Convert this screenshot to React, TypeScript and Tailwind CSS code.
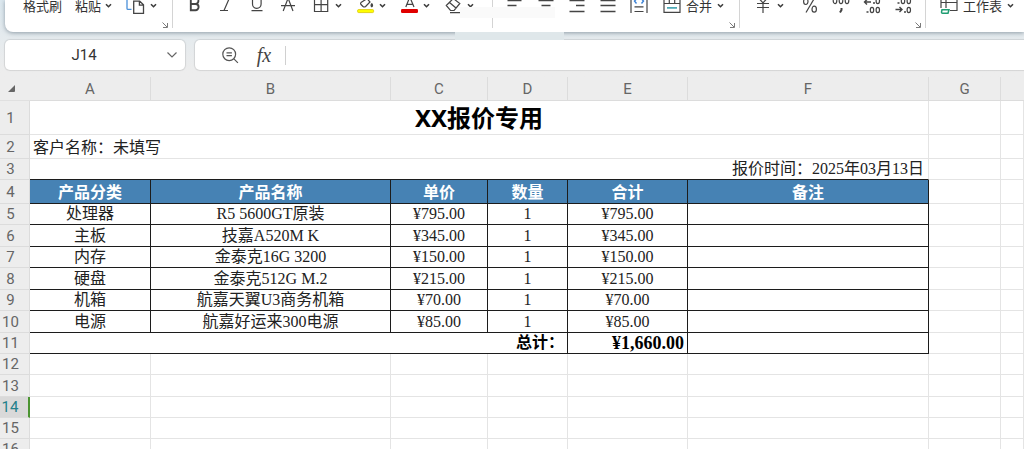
import { useState, type ReactNode } from 'react';
import { clsx } from 'clsx';

const COLUMNS = [
  { label: 'A', width: 'w-[121px]' },
  { label: 'B', width: 'w-[240px]' },
  { label: 'C', width: 'w-[97px]' },
  { label: 'D', width: 'w-[80px]' },
  { label: 'E', width: 'w-[120px]' },
  { label: 'F', width: 'w-[241px]' },
  { label: 'G', width: 'w-[72px]' },
  { label: '', width: '' },
];

const HEADINGS = ['产品分类', '产品名称', '单价', '数量', '合计', '备注'];

const ITEMS = [
  { category: '处理器', name: 'R5 5600GT原装', price: '¥795.00', count: 1, total: '¥795.00' },
  { category: '主板', name: '技嘉A520M K', price: '¥345.00', count: 1, total: '¥345.00' },
  { category: '内存', name: '金泰克16G 3200', price: '¥150.00', count: 1, total: '¥150.00' },
  { category: '硬盘', name: '金泰克512G M.2', price: '¥215.00', count: 1, total: '¥215.00' },
  { category: '机箱', name: '航嘉天翼U3商务机箱', price: '¥70.00', count: 1, total: '¥70.00' },
  { category: '电源', name: '航嘉好运来300电源', price: '¥85.00', count: 1, total: '¥85.00' },
];

const EMPTY_ROWS = [12, 13, 14, 15, 16];
const ACTIVE_ROW = 14;

const SANS = "font-['Noto_Sans','Noto_Sans_CJK_SC',sans-serif]";
const SONG = "font-['Liberation_Serif','Noto_Sans_CJK_SC',serif]";
const GRID = 'border-r border-b border-[#e4e4e4]';
const BOXED = 'border-r border-b border-[#1c1c1c]';

function Chevron() {
  return (
    <svg width="7" height="14" viewBox="0 0 7 14" fill="none" stroke="#3c3c3c" strokeWidth="1.6">
      <path d="M1 4.200 3.500 6.700 6 4.200" />
    </svg>
  );
}

function Launcher({ label }: { label: string }) {
  return (
    <button aria-label={label} className="self-end">
      <svg width="6" height="6" viewBox="0 0 6 6" fill="none" stroke="#7b7b7b">
        <path d="M.5.5 5 5M5.5 1v4.5H1" />
      </svg>
    </button>
  );
}

// Every ribbon icon is drawn on an 18x14 box
function Icon({ children, stroke = '#444444' }: { children: ReactNode; stroke?: string }) {
  return (
    <svg width="18" height="14" viewBox="0 0 18 14" fill="none" stroke={stroke} strokeWidth="1.2">
      {children}
    </svg>
  );
}

function Tool({ label, children, className }: { label: string; children: ReactNode; className?: string }) {
  return (
    <button aria-label={label} className={clsx('flex shrink-0 items-start', className)}>
      {children}
    </button>
  );
}

function Ribbon() {
  const group = 'flex h-7 shrink-0 items-start border-r border-[#d4d4d4]';
  return (
    <div className="relative ml-[5px] flex h-8 items-start rounded-bl-lg bg-white text-[13px] leading-3 text-[#333333] shadow-[0_1px_4px_rgba(60,80,95,0.5)]">
      <div className={clsx(group, 'pr-1 pl-[18px]')}>
        <button className="mr-[13px]">格式刷</button>
        <button className="mr-[14px] flex gap-1">
          粘贴
          <Chevron />
        </button>
        <Tool label="复制" className="mr-[5px] gap-[5px]">
          <svg width="19" height="14" viewBox="0 0 19 14" fill="none" strokeWidth="1.3">
            <path d="M1 0v8.4q0 1 1 1h3.500" stroke="#4a90d9" />
            <path d="M7.700 1.200h6l3.800 3.600v8.500H7.700zM13.400 1.200v3.900h4" stroke="#444444" />
          </svg>
          <Chevron />
        </Tool>
        <Launcher label="剪贴板选项" />
      </div>

      <div className={clsx(group, 'pr-[11px] pl-[6px]')}>
        <Tool label="加粗" className="w-[31px] justify-center">
          <Icon>
            <path d="M4.800 -3v13.200h4.700a3 3 0 0 0 0-6.200H4.800M9.200 4a3 3 0 0 0 3-4" strokeWidth="1.9" />
          </Icon>
        </Tool>
        <Tool label="倾斜" className="w-[31px] justify-center">
          <Icon>
            <path d="M3 10.500h8M7 10.500 12-1" />
          </Icon>
        </Tool>
        <Tool label="下划线" className="w-[31px] justify-center">
          <Icon>
            <path d="M4.500-1v5a4.300 4.300 0 0 0 8.600 0v-5M3.500 10.700h11" />
          </Icon>
        </Tool>
        <Tool label="删除线" className="mr-[2px] w-[31px] justify-center">
          <Icon>
            <path d="M2 5.600h14M4.200 11 8.800-1h.6L14 11" />
          </Icon>
        </Tool>
        <Tool label="边框" className="w-11 gap-1 pl-2">
          <Icon>
            <path d="M1.500-2v13.500h13.200V-2M1.500 4.700h13.200M8.100-2v13.500" />
          </Icon>
          <Chevron />
        </Tool>
        <Tool label="填充颜色" className="w-11 gap-1 pl-2">
          <Icon>
            <path d="M9.500-1 4 2.500q-.8 1 0 2l2 2q1.300 1 2.600 0L13 2 9.500-2" />
            <path d="M14.800 3.500q-1.500 2.500 0 3.300 1.500-.8 0-3.300" fill="#444444" />
            <rect x=".6" y="9.600" width="16" height="3" rx="1" fill="#ffff00" stroke="#d9c400" strokeWidth=".8" />
          </Icon>
          <Chevron />
        </Tool>
        <Tool label="字体颜色" className="w-11 gap-1 pl-2">
          <Icon>
            <path d="M4.800 7 8.400-2h.8L13 7M6.200 4.300h5.500" />
            <rect y="9" width="17" height="4" rx="1.200" fill="#e00000" stroke="none" />
          </Icon>
          <Chevron />
        </Tool>
        <Tool label="清除" className="w-11 gap-1 pl-2">
          <Icon>
            <path d="m1.300 5.500 7-7 6.500 5-5.700 7H5.500zM4.500 2.500l6.500 5.500M5 12.600h10" />
          </Icon>
          <Chevron />
        </Tool>
      </div>

      <div className={clsx(group, 'pr-1 pl-[6px]')}>
        <Tool label="左对齐" className="w-[31px] justify-center">
          <Icon>
            <path d="M1.500.500h14M1.500 5.500h9" strokeWidth="1.400" />
          </Icon>
        </Tool>
        <Tool label="居中" className="w-[31px] justify-center">
          <Icon>
            <path d="M1.500.500h15M4.500 5.500h9" strokeWidth="1.400" />
          </Icon>
        </Tool>
        <Tool label="右对齐" className="w-[31px] justify-center">
          <Icon>
            <path d="M1.500.500h15M8 5.500h8.500M1.500 11.500h15" strokeWidth="1.400" />
          </Icon>
        </Tool>
        <Tool label="两端对齐" className="w-[31px] justify-center">
          <Icon>
            <path d="M1.500.500h15M1.500 5.500h15M1.500 11.500h15" strokeWidth="1.400" />
          </Icon>
        </Tool>
        <Tool label="分散对齐" className="mr-[9px] w-[31px] justify-center">
          <Icon>
            <path d="M1 0v13M17 0v13M4.500 6.800h9M4.500 11.500h9" />
            <path d="M6.500-1 4.500 1l2 2.500M11.500-1l2 2-2 2.500" stroke="#3b82d6" strokeWidth="1.400" />
          </Icon>
        </Tool>
        <button className="mr-[5px] flex gap-[5px]">
          <Icon>
            <path d="M1-1v13.400h16V-1M1 3.500h16M6.300-1v4.500M11.700-1v4.500" />
            <path d="M4 7.900h10" stroke="#2f9aa8" strokeWidth="1.500" />
          </Icon>
          合并
          <Chevron />
        </button>
        <Launcher label="对齐选项" />
      </div>

      <div className={clsx(group, 'pr-1 pl-[14px]')}>
        <Tool label="货币" className="mr-[17px] gap-[5px]">
          <Icon>
            <path d="M4.500-2 9 2.800 13.500-2M9 2.800V13M3 3.500h12M3 7.500h12" />
          </Icon>
          <Chevron />
        </Tool>
        <Tool label="百分比" className="mr-[13px]">
          <Icon>
            <path d="M5 12.500 13-1" />
            <ellipse cx="4.800" cy="1.500" rx="2.200" ry="3" />
            <ellipse cx="13.200" cy="9.200" rx="2.200" ry="3" />
          </Icon>
        </Tool>
        <Tool label="千位分隔" className="mr-[13px]">
          <Icon>
            <ellipse cx="3" cy=".8" rx="1.800" ry="2.800" />
            <ellipse cx="9" cy=".8" rx="1.800" ry="2.800" />
            <ellipse cx="15" cy=".8" rx="1.800" ry="2.800" />
            <path d="M9.500 8v2L8 12.500" strokeWidth="2" />
          </Icon>
        </Tool>
        <Tool label="增加小数位数" className="mr-[13px]">
          <Icon>
            <path d="M8 2H1.500M4-.500 1.500 2 4 4.500M3.500 12h2M10 3h2" strokeWidth="1.400" />
            <ellipse cx="14.800" cy="1" rx="1.700" ry="2.600" />
            <ellipse cx="9" cy="10" rx="1.700" ry="2.600" />
            <ellipse cx="14.800" cy="10" rx="1.700" ry="2.600" />
          </Icon>
        </Tool>
        <Tool label="减少小数位数" className="mr-[3px]">
          <Icon>
            <path d="M1.500 9.500H8M5.500 7 8 9.500 5.500 12M3.500 3h2M10 12h2" strokeWidth="1.400" />
            <ellipse cx="9" cy="1" rx="1.700" ry="2.600" />
            <ellipse cx="14.800" cy="1" rx="1.700" ry="2.600" />
            <ellipse cx="14.800" cy="10" rx="1.700" ry="2.600" />
          </Icon>
        </Tool>
        <Launcher label="数字选项" />
      </div>

      <button className="ml-[14px] flex shrink-0 gap-[5px]">
        <Icon>
          <path d="M1 8V-1M10 10.500h7V-1M1 2.500h16M6 0v8" />
          <path d="M2 9.800h7l-1 3.400H2.500q-1 0-1-1z" stroke="#1f9d72" strokeWidth="1.500" />
        </Icon>
        工作表
        <Chevron />
      </button>

      <div className="absolute top-[7px] left-[455px] h-[11px] w-[95px] bg-[#fafafa]" />
      <div className="absolute top-8 left-[450px] h-2 w-[109px] bg-[#dfe7ea]" />
    </div>
  );
}

function FormulaBar() {
  const [cell, setCell] = useState('J14');
  const [formula, setFormula] = useState('');
  return (
    <div className="mt-2 flex h-[30px] gap-[10px] pl-[5px]">
      <div className="flex w-[180px] shrink-0 items-center rounded-[5px] bg-white shadow-[0_0_1px_1px_rgba(0,0,0,0.1)]">
        <input
          aria-label="名称框"
          value={cell}
          onChange={(e) => setCell(e.target.value)}
          className="w-[158px] bg-transparent text-center font-['Roboto',sans-serif] text-[15px] text-[#333333] outline-none"
        />
        <button aria-label="选择名称" className="ml-1">
          <svg width="10" height="6" viewBox="0 0 10 6" fill="none" stroke="#666666" strokeWidth="1.200">
            <path d="m.5.5 4.500 4.500L9.500.500" />
          </svg>
        </button>
      </div>
      <div className="flex grow items-center rounded-l-[5px] bg-white pl-[27px] shadow-[0_0_1px_1px_rgba(0,0,0,0.1)]">
        <button aria-label="浮动编辑">
          <svg width="17" height="17" viewBox="0 0 17 17" fill="none" stroke="#555555" strokeWidth="1.200">
            <circle cx="7.200" cy="7.200" r="6.400" />
            <path d="M4.500 5.800h5.400M4.500 8.700h5.400M11.900 11.900l4 4" />
          </svg>
        </button>
        <button
          aria-label="插入函数"
          className="ml-4 w-[18px] font-['Liberation_Serif',serif] text-xl leading-5 text-[#444444] italic"
        >
          fx
        </button>
        <input
          aria-label="编辑栏"
          value={formula}
          onChange={(e) => setFormula(e.target.value)}
          className="ml-3 h-[19px] min-w-0 grow border-l border-[#d0d0d0] px-2 text-sm outline-none"
        />
      </div>
    </div>
  );
}

function RowHeader({ row }: { row: number }) {
  return (
    <th
      scope="row"
      className={clsx(
        "border-b border-[#dcdcdc] pr-2 text-center font-['Roboto',sans-serif] text-[15px] leading-5 font-normal",
        row === ACTIVE_ROW
          ? 'border-r-2 border-r-[#4b9431] bg-[#d9d9d9] text-[#23808a]'
          : 'border-r bg-[#ededed] text-[#666666]',
      )}
    >
      {row}
    </th>
  );
}

function GridCells({ count }: { count: number }) {
  return Array.from({ length: count }, (_, i) => <td key={i} className={GRID} />);
}

function Sheet() {
  return (
    <table className="mt-[7px] w-full table-fixed border-separate border-spacing-0 bg-white text-base leading-5 whitespace-nowrap text-[#222222]">
      <colgroup>
        <col className="w-[30px]" />
        {COLUMNS.map((column, i) => (
          <col key={i} className={column.width} />
        ))}
      </colgroup>
      <thead>
        <tr className="h-6 bg-[#ededed] font-['Roboto',sans-serif] text-[15px] text-[#666666]">
          <td className="border-b border-[#e0e0e0]">
            <svg width="7" height="7" viewBox="0 0 7 7" className="ml-2" fill="#666666">
              <path d="M7 0v6q0 1-1 1H0z" />
            </svg>
          </td>
          {COLUMNS.map((column, i) => (
            <th key={i} scope="col" className="border-r border-b border-[#dcdcdc] font-normal last:border-r-0">
              {column.label}
            </th>
          ))}
        </tr>
      </thead>
      <tbody>
        <tr className="h-[34px]">
          <RowHeader row={1} />
          <td colSpan={6} className={clsx(GRID, SANS, 'text-center text-2xl font-bold text-black')}>
            XX报价专用
          </td>
          <GridCells count={2} />
        </tr>
        <tr className="h-6">
          <RowHeader row={2} />
          <td colSpan={6} className={clsx(GRID, SANS, 'pl-[3px]')}>
            客户名称：未填写
          </td>
          <GridCells count={2} />
        </tr>
        <tr className="h-[21px]">
          <RowHeader row={3} />
          <td colSpan={6} className={clsx(SONG, 'border-r border-b border-r-[#e4e4e4] border-b-[#1c1c1c] pr-1 text-right')}>
            报价时间：2025年03月13日
          </td>
          <GridCells count={2} />
        </tr>
        <tr className="h-6">
          <RowHeader row={4} />
          {HEADINGS.map((heading) => (
            <th key={heading} scope="col" className={clsx(BOXED, SANS, 'bg-[#4682b4] font-bold text-white')}>
              {heading}
            </th>
          ))}
          <GridCells count={2} />
        </tr>
        {ITEMS.map((item, i) => (
          <tr key={item.category} className={clsx('text-center', SONG, i % 2 === 0 ? 'h-[21px]' : 'h-[22px]')}>
            <RowHeader row={i + 5} />
            <td className={BOXED}>{item.category}</td>
            <td className={BOXED}>{item.name}</td>
            <td className={BOXED}>{item.price}</td>
            <td className={BOXED}>{item.count}</td>
            <td className={BOXED}>{item.total}</td>
            <td className={BOXED} />
            <GridCells count={2} />
          </tr>
        ))}
        <tr className={clsx('h-[21px] text-right font-bold text-black', SONG)}>
          <RowHeader row={11} />
          <td colSpan={4} className={clsx(BOXED, 'pr-[3px]')}>
            总计：
          </td>
          <td className={clsx(BOXED, 'pr-[3px] text-lg leading-5')}>¥1,660.00</td>
          <td className={BOXED} />
          <GridCells count={2} />
        </tr>
        {EMPTY_ROWS.map((row) => (
          <tr key={row} className={row === 13 ? 'h-[22px]' : 'h-[21px]'}>
            <RowHeader row={row} />
            <GridCells count={8} />
          </tr>
        ))}
      </tbody>
    </table>
  );
}

export default function App() {
  return (
    <main className="h-screen overflow-hidden bg-[#ededed] bg-linear-to-b from-[#dce8ef] from-0% to-[#ededed] to-[72px] font-['Noto_Sans_CJK_SC',sans-serif]">
      <Ribbon />
      <FormulaBar />
      <Sheet />
    </main>
  );
}
